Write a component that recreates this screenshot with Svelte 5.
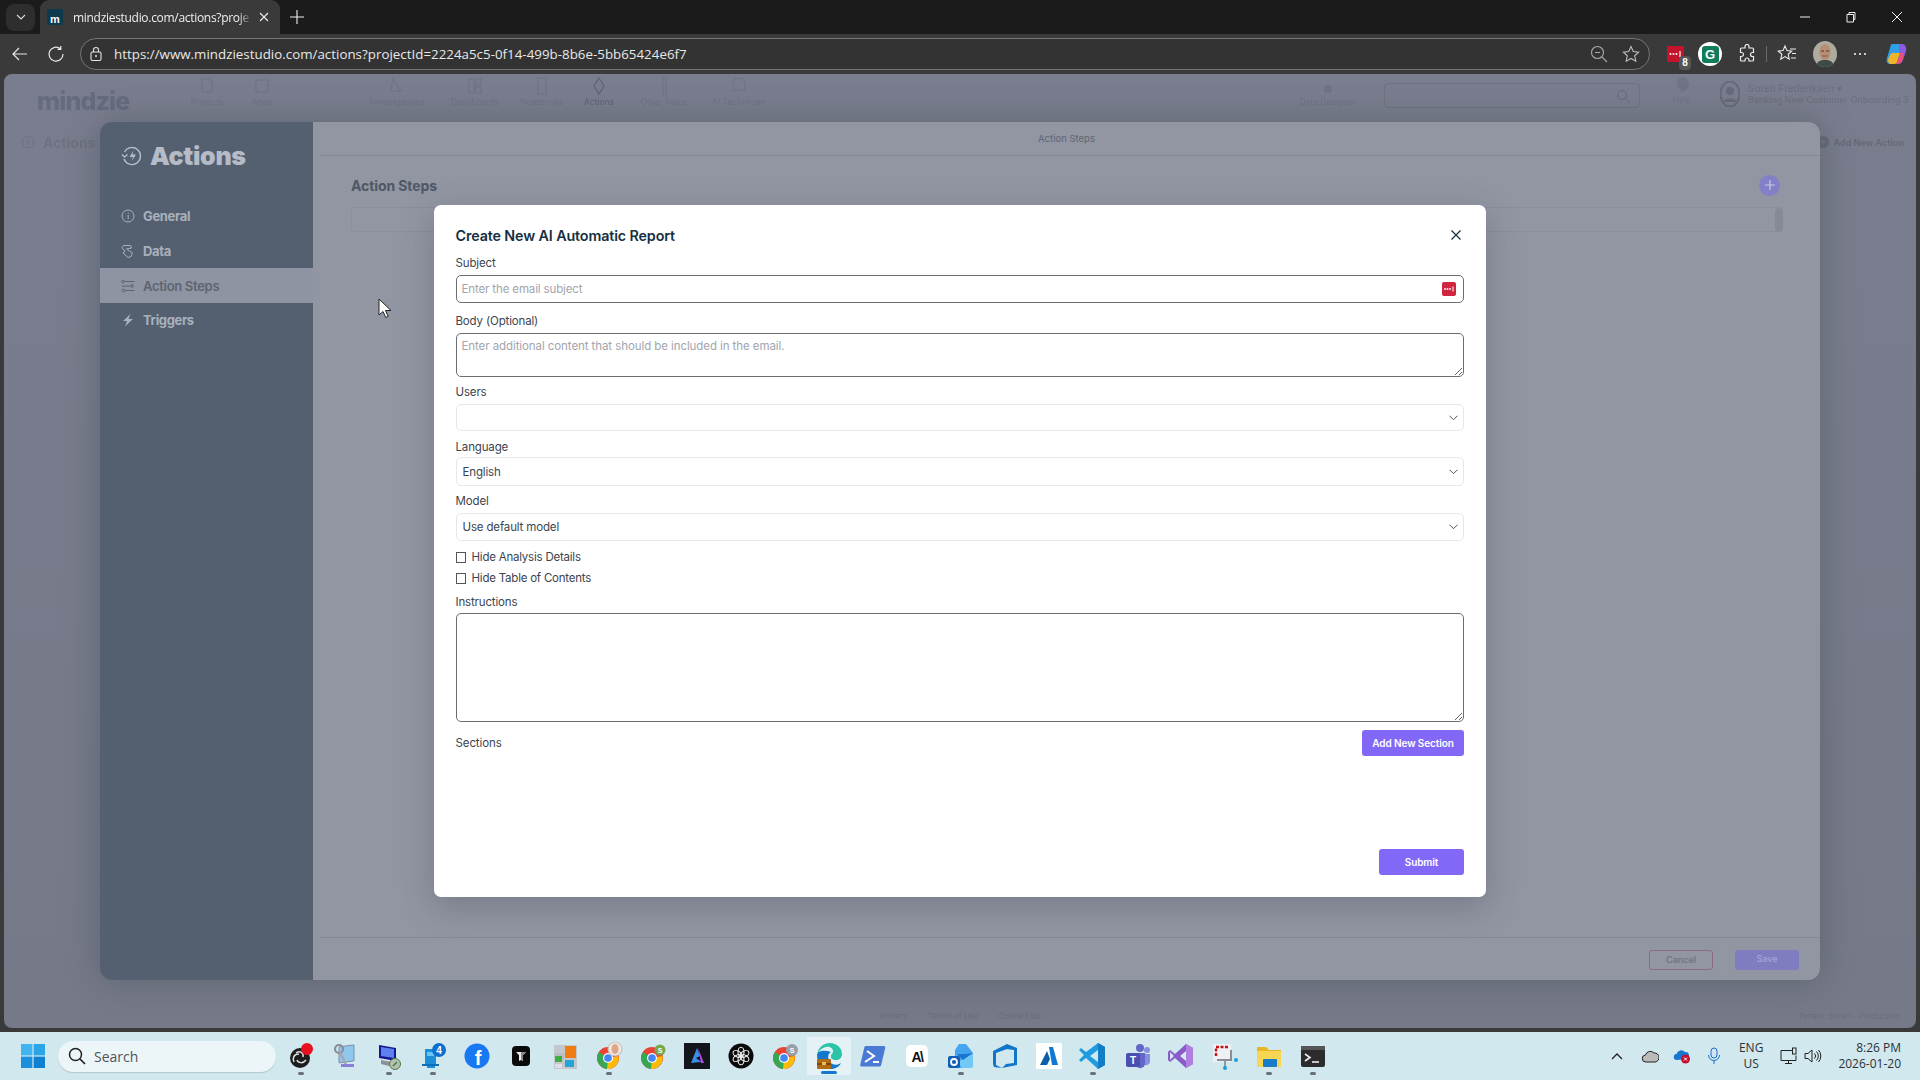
<script>
  const navItems = [
    ['Projects', 'M-5 -7h7l3 3v10h-10z'],
    ['Apps', 'M-6 -6h12v12h-12z'],
    ['Investigations', 'M-4 -7l8 12h-10z'],
    ['Dashboards', 'M-6 -7h5v14h-5zM1 -7h5v6h-5zM1 1h5v6h-5z'],
    ['Notebooks', 'M-4 -8h8v16h-8z'],
    ['Actions', 'M0 -8l5 8-5 8-5-8z'],
    ['Other Inbox', 'M-1 -8h3v16h-3z'],
    ['AI Technician', 'M-6 -2a6 6 0 0 1 12 0v6h-12z']
  ];
  const sideItems = ['General', 'Data', 'Action Steps', 'Triggers'];
</script>

<div class="screen">
  <header class="tabstrip">
    <div class="tabmenu">
      <svg width="12" height="12" viewBox="0 0 12 12"><path d="M2 4l4 4 4-4" fill="none" stroke="#ddd" stroke-width="1.1"/></svg>
    </div>
    <div class="tab">
      <div class="favicon"><span>m</span></div>
      <span class="tabtitle">mindziestudio.com/actions?proje</span>
      <svg class="tabclose" width="10" height="10" viewBox="0 0 10 10"><path d="M1 1l8 8M9 1l-8 8" stroke="#eee" stroke-width="1.1"/></svg>
    </div>
    <svg class="newtab" width="14" height="14" viewBox="0 0 14 14"><path d="M7 0v14M0 7h14" stroke="#eee" stroke-width="1.1"/></svg>
    <div class="winctl">
      <svg width="12" height="12" viewBox="0 0 12 12"><path d="M1 6h10" stroke="#eee"/></svg>
      <svg width="12" height="12" viewBox="0 0 12 12"><path d="M2 3.5h6.5v7.500h-6.500zM4 3.500v-2h6v7h-1.500" fill="none" stroke="#eee"/></svg>
      <svg width="12" height="12" viewBox="0 0 12 12"><path d="M1 1l10 10M11 1l-10 10" stroke="#eee"/></svg>
    </div>
  </header>

  <div class="toolbar">
    <svg class="tool back" width="18" height="18" viewBox="0 0 18 18"><path d="M16 9H2M8 3L2 9l6 6" fill="none" stroke="#e6e6e6" stroke-width="1.200"/></svg>
    <svg class="tool reload" width="18" height="18" viewBox="0 0 18 18"><path d="M13.500 3.800A7 7 0 1 0 16 9M13.800 1v3.300h-3.300" fill="none" stroke="#e6e6e6" stroke-width="1.200"/></svg>
    <div class="address">
      <svg width="14" height="16" viewBox="0 0 14 16"><rect x="2" y="6" width="10" height="8.500" rx="1.500" fill="none" stroke="#e6e6e6" stroke-width="1.100"/><path d="M4.500 6V4a2.500 2.500 0 0 1 5 0v2" fill="none" stroke="#e6e6e6" stroke-width="1.100"/><circle cx="7" cy="10" r="1" fill="#e6e6e6"/></svg>
      <span class="url">https://www.mindziestudio.com/actions?projectId=2224a5c5-0f14-499b-8b6e-5bb65424e6f7</span>
      <svg class="zoomout" width="18" height="18" viewBox="0 0 18 18"><circle cx="7.500" cy="7.500" r="6" fill="none" stroke="#a8a8a8" stroke-width="1.100"/><path d="M5 7.500h5M12 12l5 5" stroke="#a8a8a8" stroke-width="1.100"/></svg>
      <svg class="star" width="18" height="18" viewBox="0 0 18 18"><path d="M9 1.500l2.300 5 5.300.6-3.900 3.700 1.100 5.400L9 13.500l-4.800 2.700 1.100-5.400L1.400 7.100l5.300-.6z" fill="none" stroke="#bdbdbd" stroke-width="1.100"/></svg>
    </div>
    <div class="exts">
      <div class="ext-red">
        <svg width="17" height="16" viewBox="0 0 17 16"><circle cx="3.500" cy="8" r="1" fill="#fff"/><circle cx="6.500" cy="8" r="1" fill="#fff"/><circle cx="9.500" cy="8" r="1" fill="#fff"/><path d="M13 5v6" stroke="#fff" stroke-width="1.200"/></svg>
        <b>8</b>
      </div>
      <div class="ext-g"><span>G</span></div>
      <svg class="ext-puzzle" width="18" height="20" viewBox="0 0 18 20"><path d="M7 2.500a2 2 0 0 1 4 0V4h3.500a1 1 0 0 1 1 1v3.500h-1a2 2 0 0 0 0 4h1V16a1 1 0 0 1-1 1H11v-1a2 2 0 0 0-4 0v1H3.500a1 1 0 0 1-1-1v-3.500h1a2 2 0 0 0 0-4h-1V5a1 1 0 0 1 1-1H7z" fill="none" stroke="#eee" stroke-width="1.200"/></svg>
      <i class="ext-sep"></i>
      <svg class="ext-fav" width="20" height="20" viewBox="0 0 20 20"><path d="M8 2l2 4.600 4.700.5-3.500 3.200 1 4.800L8 12.600l-4.200 2.500 1-4.800L1.300 7.100 6 6.600z" fill="none" stroke="#eee" stroke-width="1.100"/><path d="M13 5h6M15 9.500h4M14 14h5" stroke="#eee" stroke-width="1.100"/></svg>
      <div class="ext-avatar"><svg width="24" height="26" viewBox="0 0 24 26"><rect width="24" height="26" fill="#aeac9e"/><ellipse cx="12" cy="11" rx="5.500" ry="8" fill="#b98d74"/><path d="M3 26c1-6 4-7 9-7s8 1 9 7z" fill="#3c4a48"/><path d="M8 10h3M13 10h3" stroke="#4a3a30"/><path d="M9 15h6" stroke="#7c5a48"/></svg></div>
      <svg class="ext-dots" width="14" height="4" viewBox="0 0 14 4"><circle cx="2" cy="2" r="1.100" fill="#eee"/><circle cx="7" cy="2" r="1.100" fill="#eee"/><circle cx="12" cy="2" r="1.100" fill="#eee"/></svg>
      <svg class="ext-copilot" width="24" height="24" viewBox="0 0 24 24"><path d="M7 2h7c3 0 3 3 2 6l-3 10c-1 3-2 4-5 4H5c-3 0-4-3-3-6l3-10c.500-2 1-4 2-4z" fill="#2f9fe8"/><path d="M14 2h3c3 0 5 3 4 7l-3 9c-1 3-3 4-6 4H9c3 0 4-2 5-5z" fill="#8d5be0"/><path d="M7 11h8l-3 9c-.500 1.500-2 2-3 2H6c-2 0-3-2-3-4 0-1 3-7 4-7z" fill="#f0b429"/><path d="M15 11h4l-1 6c-1 3-3 5-6 5H9c3 0 3-2 3.500-3z" fill="#e8517a"/></svg>
    </div>
  </div>

  <div class="pagewrap">
    <main class="page">
      <div class="topnav dim">
        <div class="logo">mindzie</div>
        {#each navItems as [label, d], i}
          {#if i === 2}<div></div>{/if}
          <div class="navitem" class:strong={i === 5}>
            <svg width="20" height="20" viewBox="-10 -10 20 20"><path {d} fill="none" stroke="currentColor" stroke-width="1.200"/></svg>
            <span>{label}</span>
          </div>
        {/each}
        <div class="nav-right">
          <div class="navitem designer">
            <svg width="14" height="14" viewBox="-7 -7 14 14"><circle r="4" fill="currentColor"/></svg>
            <span>Data Designer</span>
          </div>
          <div class="searchbox">
            <svg width="14" height="14" viewBox="0 0 14 14"><circle cx="6" cy="6" r="4.500" fill="none" stroke="currentColor"/><path d="M9.500 9.500l4 4" stroke="currentColor"/></svg>
          </div>
          <div class="navitem help">
            <svg width="16" height="18" viewBox="0 0 16 18"><path d="M8 1a7 7 0 0 1 3 13.300L7 17v-3A7 7 0 0 1 8 1z" fill="currentColor"/></svg>
            <span>Help</span>
          </div>
          <div class="user">
            <svg width="20" height="26" viewBox="0 0 20 26"><ellipse cx="10" cy="13" rx="9.500" ry="12.500" fill="none" stroke="currentColor" stroke-width="2"/><circle cx="10" cy="10" r="4" fill="currentColor"/><path d="M3 21c2-5 12-5 14 0z" fill="currentColor"/></svg>
            <div class="usertext"><span class="uname">Soren Frederiksen ▾</span><span class="uproj">Banking New Customer Onboarding 3</span></div>
          </div>
        </div>
      </div>

      <div class="crumb dim">
        <div class="crumb-left">
          <svg width="14" height="14" viewBox="0 0 14 14"><circle cx="7" cy="7" r="5.800" fill="none" stroke="currentColor"/><path d="M7.500 3.500L5.500 7.500h3l-2 3" fill="none" stroke="currentColor"/></svg>
          <span>Actions</span>
        </div>
        <div class="crumb-right">
          <svg width="12" height="12" viewBox="0 0 12 12"><circle cx="6" cy="6" r="6" fill="currentColor"/><path d="M6 3v6M3 6h6" stroke="#787b8c"/></svg>
          <span>Add New Action</span>
        </div>
      </div>

      <div class="pagefoot dim">
        <div class="footlinks"><span>Privacy</span><span>Terms of Use</span><span>Contact Us</span></div>
        <span class="tenant">Tenant: Soren - Production</span>
      </div>

      <section class="panel">
        <aside class="side">
          <div class="side-head">
            <svg width="22" height="22" viewBox="0 0 22 22"><path d="M3.500 7A8.500 8.500 0 1 1 3 14" fill="none" stroke="#b4bac5" stroke-width="1.400"/><path d="M1 9.500l2.500 2.500 3-2.500" fill="none" stroke="#b4bac5" stroke-width="1.400"/><path d="M12.500 5.500L8.500 12h3.500l-1.500 4.500 4.500-7h-3.500z" fill="#b4bac5"/></svg>
            <h2>Actions</h2>
          </div>
          <nav class="side-nav">
            {#each sideItems as item, i}
              <div class="side-item" class:active={i === 2}>
                {#if i === 0}
                  <svg width="14" height="14" viewBox="0 0 14 14"><circle cx="7" cy="7" r="6" fill="none" stroke="currentColor"/><path d="M7.200 6v4.200M7.300 3.800v1" stroke="currentColor"/></svg>
                {:else if i === 1}
                  <svg width="14" height="14" viewBox="0 0 14 14"><path d="M2.500 1.500h7l1 2.500-5 1 6 4-1.500 3.500-3 1-5-4.500 2-1.500-3-4z" fill="none" stroke="currentColor"/></svg>
                {:else if i === 2}
                  <svg width="14" height="14" viewBox="0 0 14 14"><path d="M3 2.500h10.500M1 7h8.500M4 11.500h9.500" stroke="currentColor" fill="none"/><circle cx="2" cy="2.500" r="1.300" fill="none" stroke="currentColor"/><circle cx="11" cy="7" r="1.300" fill="none" stroke="currentColor"/><circle cx="2.500" cy="11.500" r="1.300" fill="none" stroke="currentColor"/></svg>
                {:else}
                  <svg width="14" height="14" viewBox="0 0 14 14"><path d="M9.500 1L2 8h4l-2 5.500L12 6H7.500z" fill="currentColor"/></svg>
                {/if}
                <span>{item}</span>
              </div>
            {/each}
          </nav>
        </aside>
        <div class="panel-main">
          <div class="panel-tabs"><span>Action Steps</span></div>
          <div class="panel-body">
            <div class="panel-title">
              <h3>Action Steps</h3>
              <div class="plus"><svg width="10" height="10" viewBox="0 0 10 10"><path d="M5 0v10M0 5h10" stroke="#c8c8e8" stroke-width="1.200"/></svg></div>
            </div>
            <div class="steps-row"><i class="thumb"></i></div>
          </div>
          <div class="panel-foot">
            <div class="btn-cancel">Cancel</div>
            <div class="btn-save">Save</div>
          </div>
        </div>
      </section>

      <div class="dialog">
        <div class="dlg-head">
          <h1>Create New AI Automatic Report</h1>
          <svg width="10" height="10" viewBox="0 0 10 10"><path d="M.5.500l9 9M9.500.500l-9 9" stroke="#12303a" stroke-width="1.200"/></svg>
        </div>

        <label class="lbl g10" for="subj">Subject</label>
        <div class="inputwrap">
          <input id="subj" class="strong-input" placeholder="Enter the email subject" />
          <div class="redbadge">
            <svg width="14" height="14" viewBox="0 0 14 14"><circle cx="3" cy="7" r=".9" fill="#fff"/><circle cx="5.500" cy="7" r=".9" fill="#fff"/><circle cx="8" cy="7" r=".9" fill="#fff"/><path d="M11 4.500v5" stroke="#fff" stroke-width="1"/></svg>
          </div>
        </div>

        <label class="lbl g10" for="bodyta">Body (Optional)</label>
        <textarea id="bodyta" class="ta body-ta" placeholder="Enter additional content that should be included in the email."></textarea>

        <label class="lbl g7" for="users">Users</label>
        <div class="selwrap h27">
          <select id="users"><option></option></select>
          <svg width="9" height="6" viewBox="0 0 9 6"><path d="M.5.700l4 4 4-4" fill="none" stroke="#555" stroke-width="1"/></svg>
        </div>

        <label class="lbl g8 tight" for="lang">Language</label>
        <div class="selwrap h29">
          <select id="lang"><option>English</option></select>
          <svg width="9" height="6" viewBox="0 0 9 6"><path d="M.5.700l4 4 4-4" fill="none" stroke="#555" stroke-width="1"/></svg>
        </div>

        <label class="lbl g7" for="model">Model</label>
        <div class="selwrap h28">
          <select id="model"><option>Use default model</option></select>
          <svg width="9" height="6" viewBox="0 0 9 6"><path d="M.5.700l4 4 4-4" fill="none" stroke="#555" stroke-width="1"/></svg>
        </div>

        <label class="check first"><input type="checkbox" /><span>Hide Analysis Details</span></label>
        <label class="check"><input type="checkbox" /><span>Hide Table of Contents</span></label>

        <label class="lbl g7 instr" for="instr">Instructions</label>
        <textarea id="instr" class="ta instr-ta"></textarea>

        <div class="sections">
          <span>Sections</span>
          <button class="primary">Add New Section</button>
        </div>

        <div class="dlg-foot"><button class="primary submit">Submit</button></div>
      </div>

      <svg class="cursor" width="14" height="22" viewBox="0 0 14 22"><path d="M1 1v16l4-3.500 2.700 6 2.500-1.100-2.700-5.900H13z" fill="#fff" stroke="#222" stroke-width="1"/></svg>
    </main>
  </div>

  <footer class="taskbar">
    <svg class="start" width="24" height="24" viewBox="0 0 24 24"><rect width="11.400" height="11.400" fill="#3fb4ee"/><rect x="12.600" width="11.400" height="11.400" fill="#2aa5e8"/><rect y="12.600" width="11.400" height="11.400" fill="#1a8fdb"/><rect x="12.600" y="12.600" width="11.400" height="11.400" fill="#0f7fcf"/></svg>
    <div class="tsearch">
      <svg width="18" height="18" viewBox="0 0 18 18"><circle cx="7.500" cy="7.500" r="6" fill="none" stroke="#222" stroke-width="1.500"/><path d="M12 12l5 5" stroke="#222" stroke-width="1.700"/></svg>
      <span>Search</span>
    </div>

    <div class="apps">
      <div class="app"><svg width="28" height="28" viewBox="0 0 28 28"><circle cx="13" cy="16" r="10" fill="#1d1d1d"/><path d="M9 11c4-3 8 0 7 4M19 18c-3 4-8 3-9 0M7 20c-2-4 0-8 5-8" fill="none" stroke="#ddd" stroke-width="1.500"/><circle cx="20" cy="7" r="6" fill="#e8121f"/></svg><i></i></div>
      <div class="app"><svg width="28" height="28" viewBox="0 0 28 28"><rect x="8" y="6" width="15" height="16" rx="1" transform="skewY(-8)" fill="#8ec8ee" stroke="#7a8ea8"/><circle cx="8" cy="7" r="4" fill="none" stroke="#8c8c94" stroke-width="2.200"/><path d="M9 10l6 13" stroke="#a6a6ae" stroke-width="2.500"/><rect x="10" y="22" width="13" height="3" fill="#8b7fd8"/></svg></div>
      <div class="app"><svg width="28" height="28" viewBox="0 0 28 28"><path d="M4 3l17 3v13L4 16z" fill="#16178c"/><path d="M6 5l13 2v9L6 14z" fill="#5e7ff0"/><path d="M6 18l10 2-2 4-8-2z" fill="#8f8f98"/><circle cx="20" cy="22" r="5.500" fill="#b7bfae" stroke="#4e7a4a"/><path d="M18 24l4-4" stroke="#2a8a3a" stroke-width="1.500"/></svg><i></i></div>
      <div class="app"><svg width="28" height="28" viewBox="0 0 28 28"><path d="M6 7h11v15H6z" fill="#1d8fd8"/><path d="M8 10h7v4H8z" fill="#6cc6f0"/><path d="M3 22h17v2H3z" fill="#0d6fb8"/><rect x="8" y="24" width="8" height="2" fill="#1d8fd8"/><circle cx="20" cy="8" r="7" fill="#0f6fd0"/><text x="20" y="11.500" text-anchor="middle" class="badge4">4</text></svg><i></i></div>
      <div class="app"><svg width="28" height="28" viewBox="0 0 28 28"><circle cx="14" cy="14" r="12.500" fill="#1877f2"/><text x="15" y="23" text-anchor="middle" class="fb">f</text></svg></div>
      <div class="app"><svg width="28" height="28" viewBox="0 0 28 28"><rect x="5" y="4" width="18" height="20" rx="4" fill="#0a0a0a"/><path d="M9 10h10l-3 3v6l-2-1-2 1v-6z" fill="#eee"/><path d="M14 10h5l-3 3v6l-2-1z" fill="#888"/></svg></div>
      <div class="app"><svg width="28" height="28" viewBox="0 0 28 28"><rect x="3" y="3" width="23" height="24" fill="#c4c8cc"/><rect x="14" y="4" width="11" height="12" fill="#ef7d14"/><rect x="4" y="11" width="9" height="6" fill="#b9bcc0"/><rect x="4" y="14" width="7" height="6" fill="#3fae3f"/><rect x="14" y="18" width="9" height="7" fill="#22a5d4"/><rect x="4" y="22" width="7" height="4" fill="#dde"/></svg></div>
      <div class="app"><svg width="28" height="28" viewBox="0 0 28 28"><circle cx="13" cy="16" r="11" fill="#ea4335"/><path d="M13 16L4 10a11 11 0 0 0 8 17z" fill="#34a853"/><path d="M13 16l10.500-2A11 11 0 0 1 12 27z" fill="#fbbc05"/><circle cx="13" cy="16" r="5" fill="#fff"/><circle cx="13" cy="16" r="3.800" fill="#4285f4"/><circle cx="20" cy="7" r="7" fill="#f3e6dc" stroke="#bbb"/><ellipse cx="20" cy="7" rx="3.500" ry="5" fill="#dba78a"/></svg><i></i></div>
      <div class="app"><svg width="28" height="28" viewBox="0 0 28 28"><circle cx="13" cy="16" r="11" fill="#ea4335"/><path d="M13 16L4 10a11 11 0 0 0 8 17z" fill="#34a853"/><path d="M13 16l10.500-2A11 11 0 0 1 12 27z" fill="#fbbc05"/><circle cx="13" cy="16" r="5" fill="#fff"/><circle cx="13" cy="16" r="3.800" fill="#4285f4"/><circle cx="21" cy="8" r="5.500" fill="#77a94a"/><text x="21" y="10.500" text-anchor="middle" class="chip">S</text></svg></div>
      <div class="app"><svg width="28" height="28" viewBox="0 0 28 28"><rect x="1" y="1" width="26" height="26" fill="#14141c"/><path d="M8 21l6-15 3 8-4 2 7 5-3-1z" fill="#3a8ee8"/><path d="M15 6l6 15h-3z" fill="#b04ae0"/></svg></div>
      <div class="app"><svg width="28" height="28" viewBox="0 0 28 28"><circle cx="14" cy="14" r="12.500" fill="#0a0a0a"/><g fill="none" stroke="#eee" stroke-width="1.100"><ellipse cx="14" cy="10" rx="3" ry="4.800"/><ellipse cx="14" cy="10" rx="3" ry="4.800" transform="rotate(60 14 14)"/><ellipse cx="14" cy="10" rx="3" ry="4.800" transform="rotate(120 14 14)"/><ellipse cx="14" cy="10" rx="3" ry="4.800" transform="rotate(180 14 14)"/><ellipse cx="14" cy="10" rx="3" ry="4.800" transform="rotate(240 14 14)"/><ellipse cx="14" cy="10" rx="3" ry="4.800" transform="rotate(300 14 14)"/></g></svg></div>
      <div class="app"><svg width="28" height="28" viewBox="0 0 28 28"><circle cx="13" cy="16" r="11" fill="#ea4335"/><path d="M13 16L4 10a11 11 0 0 0 8 17z" fill="#34a853"/><path d="M13 16l10.500-2A11 11 0 0 1 12 27z" fill="#fbbc05"/><circle cx="13" cy="16" r="5" fill="#fff"/><circle cx="13" cy="16" r="3.800" fill="#4285f4"/><circle cx="21" cy="8" r="6" fill="#9aa0a8"/><text x="21" y="10.500" text-anchor="middle" class="chip">S</text></svg></div>
      <div class="app active"><svg width="30" height="30" viewBox="0 0 30 30"><path d="M3 14C4 6 10 2 16 2c7 0 12 5 12 11 0 4-3 6-6 6-4 0-5-2-5-3 0-4 2-3 2-6 0-3-4-5-7-4-5 1-8 5-9 8z" fill="#2bc4a8"/><path d="M3 14c0 8 6 14 13 14 5 0 9-2 11-6-4 3-9 2-11-1-2-3-3-8 1-10-6-2-13-2-14 3z" fill="#1278cc"/><rect x="3" y="18" width="14" height="10" rx="1" fill="#b06a18"/><rect x="3" y="22" width="14" height="2" fill="#7a4610"/><rect x="8" y="21" width="4" height="3" fill="#f0c040"/></svg><b class="active-bar"></b></div>
      <div class="app"><svg width="28" height="28" viewBox="0 0 28 28"><path d="M7 4h18c1 0 1.500 1 1.200 2l-4 17c-.3 1-1 1.500-2 1.500H2.500c-1 0-1.500-1-1.200-2l4-17C5.500 4.500 6 4 7 4z" fill="#4a7bd4"/><path d="M8 9l7 5-9 6" fill="none" stroke="#fff" stroke-width="2"/><path d="M14 20h6" stroke="#fff" stroke-width="2"/></svg></div>
      <div class="app"><svg width="28" height="28" viewBox="0 0 28 28"><rect x="3" y="3" width="22" height="22" rx="5" fill="#fff"/><text x="14" y="20" text-anchor="middle" class="anth">A\</text></svg></div>
      <div class="app"><svg width="28" height="28" viewBox="0 0 28 28"><path d="M12 2h7l7 9v12a3 3 0 0 1-3 3H11a3 3 0 0 1-3-3V8z" fill="#45a6f0"/><path d="M26 11v12a3 3 0 0 1-3 3h-8l-4-6z" fill="#72c9f5"/><path d="M10 12h8l8-1-10 7z" fill="#1c75cf"/><rect x="1" y="14" width="12" height="12" rx="2" fill="#0f5fb5"/><circle cx="7" cy="20" r="3" fill="none" stroke="#fff" stroke-width="1.800"/></svg><i></i></div>
      <div class="app"><svg width="28" height="28" viewBox="0 0 28 28"><path d="M16 2v5L5 11v12l6 3-8-1-1-3V9z" fill="#1175c9"/><path d="M16 2l10 4v17l-15 3 4-4 8-1V8l-8-1z" fill="#1175c9"/></svg></div>
      <div class="app"><svg width="28" height="28" viewBox="0 0 28 28"><rect x="1" y="1" width="26" height="26" fill="#fff"/><path d="M14 5h4l5 18h-6z" fill="#0f78d4"/><path d="M12 9l3 8-3 6H5z" fill="#0a5fa8"/></svg></div>
      <div class="app"><svg width="28" height="28" viewBox="0 0 28 28"><path d="M19 1l7 4v18l-7 4-12-11-5 4-2-2 5-5-5-5 2-2 5 4z" fill="#1f9ce0"/><path d="M19 8v12l-8-6z" fill="#cfe9f2"/><path d="M19 1l7 4v18l-7 4z" fill="#127cc4"/></svg><i></i></div>
      <div class="app"><svg width="28" height="28" viewBox="0 0 28 28"><circle cx="17" cy="6" r="4" fill="#6166c8"/><circle cx="24" cy="8" r="3" fill="#8a8ee0"/><path d="M13 11h9v11a5 5 0 0 1-9 2z" fill="#6166c8"/><path d="M22 12h5v8a4 4 0 0 1-5 3z" fill="#8a8ee0"/><rect x="3" y="11" width="14" height="14" rx="2" fill="#4b4fb0"/><text x="10" y="22" text-anchor="middle" class="chip-t">T</text></svg></div>
      <div class="app"><svg width="28" height="28" viewBox="0 0 28 28"><path d="M19 2l7 4v16l-7 4-11-10-5 4-2-2V10l2-2 5 4z" fill="#8a5ac8"/><path d="M19 9v10l-6-5z" fill="#d2e8ef"/><path d="M19 2l7 4v16l-7 4z" fill="#b07ee0"/><path d="M3 10l4 4-4 4z" fill="#d2e8ef"/></svg></div>
      <div class="app"><svg width="28" height="28" viewBox="0 0 28 28"><rect x="2" y="2" width="18" height="18" fill="#eef0f2"/><path d="M5 14V5h12" fill="none" stroke="#c2161d" stroke-width="2.400" stroke-dasharray="3 1.500"/><path d="M6 18h14v-10" fill="none" stroke="#8c8c94" stroke-width="2"/><path d="M14 19v7" stroke="#8c9aa8" stroke-width="2"/><circle cx="25" cy="18" r="2" fill="#1f9ce0"/><circle cx="14" cy="26" r="2" fill="#1f9ce0"/></svg></div>
      <div class="app"><svg width="28" height="28" viewBox="0 0 28 28"><path d="M2 5h9l3 3h12v17H2z" fill="#e8b820"/><path d="M2 9h24v16H2z" fill="#f6d652"/><rect x="8" y="17" width="14" height="8" rx="1" fill="#1a7cc8"/></svg><i></i></div>
      <div class="app"><svg width="28" height="28" viewBox="0 0 28 28"><rect x="2" y="4" width="24" height="21" rx="2" fill="#2c2c2e"/><rect x="2" y="4" width="24" height="4" fill="#55555a"/><path d="M6 12l5 3.500-5 3.500" fill="none" stroke="#eee" stroke-width="1.600"/><path d="M13 20h7" stroke="#eee" stroke-width="1.600"/></svg><i></i></div>
    </div>

    <div class="tray">
      <svg class="t-chev" width="12" height="8" viewBox="0 0 12 8"><path d="M1 7l5-5 5 5" fill="none" stroke="#222" stroke-width="1.300"/></svg>
      <svg class="t-cloud" width="18" height="14" viewBox="0 0 18 14"><path d="M5 13a3.500 3.500 0 0 1-.5-7A5 5 0 0 1 13 4a3.500 3.500 0 0 1 1 9z" fill="#bbb" stroke="#222"/></svg>
      <svg class="t-cloud2" width="18" height="16" viewBox="0 0 18 16"><path d="M4 12a3 3 0 0 1-.5-6A5 5 0 0 1 12 4a3 3 0 0 1 1 7z" fill="#1478d0"/><circle cx="12.500" cy="11" r="4.500" fill="#c8102e"/><path d="M11 9.500l3 3M14 9.500l-3 3" stroke="#fff"/></svg>
      <svg class="t-mic" width="14" height="18" viewBox="0 0 14 18"><rect x="4" y="1" width="6" height="10" rx="3" fill="#cfe4f6" stroke="#1a6fc4"/><path d="M1.500 8a5.500 5.500 0 0 0 11 0M7 13.500V17" fill="none" stroke="#1a6fc4"/></svg>
      <div class="t-lang"><span>ENG</span><span>US</span></div>
      <svg class="t-net" width="18" height="18" viewBox="0 0 18 18"><path d="M12 3.500H1v10h15v-5M8.500 13.500v3M5 16.500h7" fill="none" stroke="#222"/><rect x="12.500" y="1" width="3.500" height="6" fill="none" stroke="#222"/></svg>
      <svg class="t-vol" width="18" height="16" viewBox="0 0 18 16"><path d="M1 5.500h3L8 2v12l-4-3.500H1z" fill="none" stroke="#222"/><path d="M10.500 5.500a3.500 3.500 0 0 1 0 5M12.500 3.500a6.500 6.500 0 0 1 0 9M14.500 2a9 9 0 0 1 0 12" fill="none" stroke="#222"/></svg>
      <div class="t-clock"><span>8:26 PM</span><span>2026-01-20</span></div>
    </div>
  </footer>
</div>

<style>
  :global(body) { margin: 0; background: #3a3a3a; }
  * { box-sizing: border-box; }
  h1, h2, h3 { margin: 0; }

  .screen {
    width: 1920px; height: 1080px; overflow: hidden;
    display: flex; flex-direction: column;
    font-family: Inter, "Noto Sans", sans-serif;
    background: #3a3a3a;
  }

  /* browser chrome */
  .tabstrip { height: 34px; background: #1b1b1b; display: flex; align-items: center; position: relative; flex: none; }
  .tabmenu { width: 29px; height: 27px; margin-left: 6px; background: #2e2e2e; border-radius: 8px; display: flex; align-items: center; justify-content: center; }
  .tab { width: 240px; height: 34px; margin-left: 5px; background: #3a3a3a; border-radius: 9px 9px 0 0; display: flex; align-items: center; padding: 0 11px 0 7px; }
  .favicon { width: 16px; height: 16px; background: #0e3a4e; border-radius: 2px; display: flex; align-items: flex-end; justify-content: center; flex: none; }
  .favicon span { color: #fff; font: 700 11px/12px "Liberation Sans", sans-serif; }
  .tabtitle { margin-left: 10px; white-space: nowrap; color: #eee; font: 12px "Open Sans", sans-serif; letter-spacing: -.3px; -webkit-mask-image: linear-gradient(90deg, #000 94%, rgba(0,0,0,.2)); mask-image: linear-gradient(90deg, #000 94%, rgba(0,0,0,.2)); }
  .tabclose { margin-left: auto; flex: none; }
  .newtab { margin-left: 10px; }
  .winctl { margin-left: auto; display: flex; gap: 34px; padding-right: 17px; }

  .toolbar { height: 40px; background: #3a3a3a; display: flex; align-items: center; flex: none; }
  .tool { flex: none; }
  .back { margin-left: 11px; }
  .reload { margin-left: 18px; }
  .address { width: 1570px; height: 32px; margin-left: 15px; border: 1px solid #757575; border-radius: 16px; background: #333; display: flex; align-items: center; padding-left: 8px; color: #e8e8e8; }
  .url { margin-left: 11px; font: 13.300px "Open Sans", sans-serif; letter-spacing: .03px; white-space: nowrap; }
  .zoomout { margin-left: auto; }
  .star { margin-left: 14px; margin-right: 9px; }
  .exts { display: flex; align-items: center; flex: 1; position: relative; height: 100%; }
  .ext-red { position: absolute; left: 17px; top: 12px; width: 17px; height: 16px; background: #c2152c; border-radius: 1px; }
  .ext-red svg { display: block; }
  .ext-red b { position: absolute; right: -7px; bottom: -8px; width: 12px; height: 14px; background: #555; border-radius: 4px; color: #fff; font: 700 10px/14px "Liberation Sans", sans-serif; text-align: center; }
  .ext-g { position: absolute; left: 48px; top: 8px; width: 24px; height: 24px; border-radius: 50%; background: #fff; display: flex; align-items: center; justify-content: center; }
  .ext-g span { width: 17px; height: 17px; background: #0f7c5c; border-radius: 3px; color: #fff; font: 700 13px/17px "Liberation Sans", sans-serif; text-align: center; }
  .ext-puzzle { position: absolute; left: 88px; top: 10px; }
  .ext-sep { position: absolute; left: 116px; top: 12px; width: 1px; height: 16px; background: #6a6a6a; }
  .ext-fav { position: absolute; left: 127px; top: 10px; }
  .ext-avatar { position: absolute; left: 163px; top: 7px; width: 24px; height: 26px; border-radius: 50%; overflow: hidden; }
  .ext-dots { position: absolute; left: 203px; top: 18px; }
  .ext-copilot { position: absolute; left: 235px; top: 8px; }

  /* dimmed page */
  .pagewrap { flex: 1; padding: 0 4px 4px; background: #3a3a3a; min-height: 0; }
  .page { position: relative; height: 100%; background: linear-gradient(#7a7d8e, #767988); border-radius: 8px; display: flex; flex-direction: column; overflow: hidden; }
  .dim { filter: blur(.45px); }

  .topnav { height: 46px; display: grid; grid-template-columns: 176px 54px 56px 70px 74px 82px 52px 62px 68px 82px 1fr; align-items: start; color: #6f7384; flex: none; }
  .logo { font: 800 25px/54px Inter, sans-serif; color: #666c7e; padding-left: 33px; letter-spacing: -.9px; }
  .navitem { display: flex; flex-direction: column; align-items: center; padding-top: 2px; gap: 1px; font-size: 8.500px; line-height: 11px; color: #6f7384; white-space: nowrap; }
  .navitem.strong { color: #5f6373; }
  .nav-right { display: flex; align-items: flex-start; padding-left: 518px; }
  .designer { width: 60px; padding-top: 8px; }
  .searchbox { width: 256px; height: 25px; margin: 9px 0 0 26px; border: 1px solid #6e7282; border-radius: 4px; display: flex; align-items: center; justify-content: flex-end; padding-right: 9px; color: #666a7a; flex: none; }
  .help { width: 30px; margin-left: 27px; flex: none; }
  .user { display: flex; align-items: center; margin: 7px 0 0 23px; gap: 8px; color: #666a7a; flex: none; }
  .usertext { display: flex; flex-direction: column; font-size: 9px; line-height: 12px; white-space: nowrap; color: #6a6e7e; }
  .uname { font-size: 10px; }

  .crumb { display: flex; justify-content: space-between; align-items: center; height: 16px; margin-top: 14px; padding: 0 12px 0 17px; color: #6c7080; flex: none; }
  .crumb-left, .crumb-right { display: flex; align-items: center; gap: 8px; }
  .crumb-left span { font: 700 14px Inter, sans-serif; color: #6e7282; }
  .crumb-right { gap: 4px; color: #666a78; }
  .crumb-right span { font: 700 9px Inter, sans-serif; }

  .pagefoot { margin-top: auto; height: 17px; display: flex; align-items: flex-start; padding: 0 16px 0 876px; font-size: 8px; color: #6a6e7c; flex: none; }
  .footlinks { display: flex; gap: 20px; }
  .tenant { margin-left: auto; }

  .panel { position: absolute; left: 96px; top: 48px; width: 1720px; height: 858px; border-radius: 12px; overflow: hidden; display: flex; box-shadow: 0 0 34px rgba(60, 75, 85, .45); }
  .side { width: 213px; background: #54606f; flex: none; }
  .side-head { height: 77px; display: flex; align-items: center; gap: 7px; padding: 0 0 9px 21px; color: #b4bac5; }
  .side-head h2 { font: 900 25px Inter, sans-serif; letter-spacing: -.3px; color: #b6bcc7; }
  .side-nav { display: flex; flex-direction: column; }
  .side-item { height: 34.700px; display: flex; align-items: center; gap: 8px; padding-left: 21px; color: #a9b0bc; font: 700 13px Inter, sans-serif; letter-spacing: -.35px; }
  .side-item.active { background: #8e94a1; color: #5d6573; font-weight: 600; letter-spacing: -.3px; }

  .panel-main { flex: 1; background: #9196a2; display: flex; flex-direction: column; min-width: 0; }
  .panel-tabs { height: 34px; margin-left: 7px; border-bottom: 1px solid #848996; display: flex; align-items: center; justify-content: center; font-size: 9.500px; color: #5f6572; padding-right: 7px; }
  .panel-body { flex: 1; padding: 18px 38px 0 38px; min-height: 0; }
  .panel-title { display: flex; align-items: center; justify-content: space-between; height: 22px; }
  .panel-title h3 { font: 700 14px Inter, sans-serif; color: #4f5766; letter-spacing: -.1px; }
  .plus { width: 21px; height: 21px; border-radius: 50%; background: #8480c8; display: flex; align-items: center; justify-content: center; margin-right: 2px; }
  .steps-row { height: 25px; margin-top: 11px; border: 1px solid #8a8f9b; border-radius: 3px; position: relative; }
  .thumb { position: absolute; right: -2px; top: 0; width: 8px; height: 24px; background: #858a95; border-radius: 4px; }
  .panel-foot { height: 43px; margin-left: 7px; border-top: 1px solid #858a97; display: flex; align-items: flex-start; justify-content: flex-end; gap: 22px; padding: 12px 21px 0 0; }
  .btn-cancel, .btn-save { width: 64px; height: 20px; border-radius: 3px; font: 500 9px/17px Inter, sans-serif; text-align: center; }
  .btn-cancel { border: 1px solid #8d6a83; color: #6d7080; }
  .btn-save { background: #7f7cc0; color: #a5a7d4; }

  /* dialog */
  .dialog { position: absolute; left: 430px; top: 131px; width: 1052px; height: 692px; background: #fff; border-radius: 7px; box-shadow: 0 10px 34px rgba(50, 55, 70, .28); padding: 20px 22px 22px 21.500px; display: flex; flex-direction: column; color: #3c4450; }
  .dlg-head { height: 20px; display: flex; align-items: center; justify-content: space-between; padding-right: 3px; flex: none; }
  .dlg-head h1 { font: 600 14.300px Inter, sans-serif; color: #15303f; letter-spacing: -.12px; }
  .lbl { display: block; height: 16px; font-size: 11.500px; line-height: 16px; color: #3c4450; margin-bottom: 4px; letter-spacing: -.15px; flex: none; }
  .g10 { margin-top: 10px; }
  .g8 { margin-top: 8px; }
  .g7 { margin-top: 7px; }
  .tight { margin-bottom: 2px; }
  .instr { margin-top: 7px; margin-bottom: 3px; }

  .inputwrap { position: relative; height: 28px; flex: none; }
  .strong-input { width: 100%; height: 100%; border: 1.500px solid #6a6d72; border-radius: 5px; padding: 0 28px 0 5px; font: 11.500px Inter, sans-serif; letter-spacing: -.13px; outline: none; background: #fff; }
  input::placeholder, textarea::placeholder { color: #a2a5ad; opacity: 1; }
  .redbadge { position: absolute; right: 8px; top: 7px; width: 14px; height: 14px; background: #d0243f; border-radius: 2px; }
  .redbadge svg { display: block; }

  .ta { display: block; width: 100%; border: 1.500px solid #6a6d72; border-radius: 5px; padding: 4px 5px; font: 11.500px/16px Inter, sans-serif; letter-spacing: -.08px; outline: none; background: #fff; resize: vertical; flex: none; }
  .body-ta { height: 44px; }
  .instr-ta { height: 109px; }

  .selwrap { position: relative; flex: none; }
  .h27 { height: 27px; }
  .h28 { height: 28px; }
  .h29 { height: 29px; }
  .selwrap select { appearance: none; width: 100%; height: 100%; border: 1px solid #e6e6ec; border-radius: 5px; padding: 0 24px 0 6px; background: #fff; font: 11.500px Inter, sans-serif; letter-spacing: -.15px; color: #3c4450; outline: none; }
  .selwrap svg { position: absolute; right: 6px; top: 50%; margin-top: -3px; }

  .check { display: flex; align-items: center; gap: 6px; height: 18px; margin-top: 3px; font-size: 11.500px; letter-spacing: -.22px; color: #3c4450; flex: none; }
  .check.first { margin-top: 7px; }
  .check input { appearance: none; width: 10px; height: 11px; margin: 1px 0 0; border: 1px solid #555; background: #fff; }

  .sections { display: flex; align-items: center; justify-content: space-between; height: 26px; margin-top: 8px; font-size: 11.500px; letter-spacing: -.1px; flex: none; }
  .primary { width: 102px; height: 26px; border: 0; border-radius: 3px; background: #8368f8; color: #fff; font: 600 10px Inter, sans-serif; letter-spacing: -.1px; }
  .submit { width: 85px; }
  .dlg-foot { margin-top: auto; display: flex; justify-content: flex-end; flex: none; }

  .cursor { position: absolute; left: 374px; top: 224px; }

  /* taskbar */
  .taskbar { height: 48px; background: #d2e8ef; display: flex; align-items: center; position: relative; flex: none; }
  .start { margin-left: 21px; flex: none; }
  .tsearch { width: 218px; height: 31px; margin-left: 13px; border-radius: 16px; background: #ecf5f8; box-shadow: 0 1px 1px rgba(0,0,0,.15); display: flex; align-items: center; padding-left: 10px; gap: 8px; color: #505458; font: 14px "Open Sans", sans-serif; flex: none; }
  .apps { display: flex; margin-left: 3px; flex: none; }
  .app { width: 44px; height: 48px; display: flex; align-items: center; justify-content: center; position: relative; }
  .app i { position: absolute; bottom: 5px; left: 19px; width: 6px; height: 3px; border-radius: 2px; background: #66707a; }
  .app.active { background: linear-gradient(transparent 5px, #e4f2f6 5px, #e4f2f6 43px, transparent 43px); }
  .active-bar { position: absolute; bottom: 6px; left: 14px; width: 16px; height: 3px; border-radius: 2px; background: #1478d0; }
  .badge4 { font: 700 10px "Liberation Sans", sans-serif; fill: #fff; }
  .fb { font: 700 20px "Liberation Sans", sans-serif; fill: #fff; }
  .chip { font: 700 7px "Liberation Sans", sans-serif; fill: #fff; }
  .chip-t { font: 700 10px "Liberation Sans", sans-serif; fill: #fff; }
  .anth { font: 700 14px "Liberation Sans", sans-serif; fill: #111; letter-spacing: -1.500px; }

  .tray { margin-left: auto; padding-right: 19px; display: flex; align-items: center; color: #2d3134; font: 12px "Open Sans", sans-serif; }
  .t-cloud { margin-left: 18px; }
  .t-cloud2 { margin-left: 14px; }
  .t-mic { margin-left: 16px; }
  .t-lang { margin-left: 18px; display: flex; flex-direction: column; align-items: center; line-height: 16px; }
  .t-net { margin-left: 17px; }
  .t-vol { margin-left: 6px; }
  .t-clock { margin-left: 16px; display: flex; flex-direction: column; align-items: flex-end; line-height: 16px; }
</style>
